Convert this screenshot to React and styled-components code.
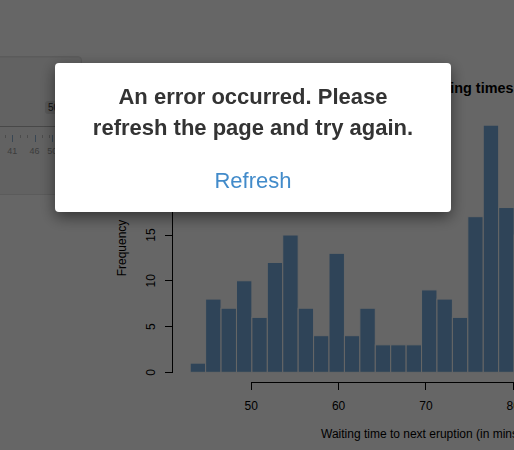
import React from "react";
import styled, { createGlobalStyle } from "styled-components";

const GlobalStyle = createGlobalStyle`
  html, body { margin: 0; padding: 0; background: #ffffff; overflow: hidden; }
  body {
    font-family: "Liberation Sans", Arial, Helvetica, sans-serif;
    font-size: 14px;
    color: #333333;
  }
`;

const Page = styled.div`
  position: relative;
  width: 514px;
  height: 450px;
  overflow: hidden;
`;

const Row = styled.div`
  display: flex;
  align-items: flex-start;
  gap: 31px;
  width: max-content;
  margin-left: -218px;
  padding-top: 55px;
`;

const Well = styled.div`
  box-sizing: border-box;
  width: 300px;
  height: 139px;
  margin-top: 1px;
  padding: 19px;
  background: #f5f5f5;
  border: 1px solid #e3e3e3;
  border-radius: 4px;
  box-shadow: inset 0 1px 1px rgba(0, 0, 0, 0.05);
`;

const Label = styled.label`
  display: block;
  font-weight: bold;
  line-height: 20px;
  margin-bottom: 5px;
`;

const Slider = styled.div`
  margin-top: 1px;
`;

const SliderTop = styled.div`
  display: flex;
  justify-content: flex-end;
  height: 25px;
`;

const EdgeBadge = styled.span`
  font-size: 10px;
  line-height: 13px;
  padding: 0 3px;
  border-radius: 3px;
  background: rgba(0, 0, 0, 0.1);
  color: #333333;
  align-self: flex-start;
`;

const Track = styled.div`
  height: 1px;
  background: #b4b4b4;
`;

const Grid = styled.svg`
  display: block;
  overflow: visible;
`;

const PlotSvg = styled.svg`
  display: block;
  flex: none;
`;

const Backdrop = styled.div`
  position: fixed;
  inset: 0;
  background: rgba(0, 0, 0, 0.6);
  display: flex;
  justify-content: center;
  align-items: flex-start;
  padding-right: 8px;
`;

const Modal = styled.div`
  box-sizing: border-box;
  width: 396px;
  margin-top: 63px;
  padding: 18px 30px 16px;
  background: #ffffff;
  border-radius: 4px;
  box-shadow: 0 5px 15px rgba(0, 0, 0, 0.5);
  text-align: center;
`;

const Message = styled.div`
  font-size: 22px;
  line-height: 31px;
  font-weight: bold;
  color: #333333;
`;

const RefreshLink = styled.a`
  display: inline-block;
  margin-top: 22px;
  font-size: 22px;
  line-height: 31px;
  color: #428bca;
  text-decoration: none;
  cursor: pointer;
`;

const counts = [1, 8, 7, 10, 6, 12, 15, 7, 4, 13, 4, 7, 3, 3, 3, 9, 8, 6, 17, 27, 18, 15, 16, 17, 13, 10, 6, 4, 2, 1];
const BIN0 = 190.2;
const BINW = 15.4233;
const Y0 = 372.3;
const YS = 9.153;
const xOf = (v) => 251.3 + (v - 50) * 8.73;
const yOf = (v) => Y0 - v * YS;

function Histogram() {
  const yTicks = [0, 5, 10, 15, 20, 25];
  const xTicks = [50, 60, 70, 80, 90];
  return (
    <PlotSvg width="589" height="400" viewBox="0 0 589 400">
      <g transform="translate(-113 -55)" fontFamily='"Liberation Sans", Arial, sans-serif' fill="#000">
        <text x="421.5" y="92.7" fontSize="14.4" fontWeight="bold" textAnchor="middle">
          Histogram of waiting times
        </text>
        {counts.map((c, i) => (
          <rect
            key={i}
            x={BIN0 + i * BINW}
            y={yOf(c)}
            width={BINW}
            height={c * YS}
            fill="#75AADB"
            stroke="#ffffff"
            strokeWidth="1"
          />
        ))}
        <g stroke="#000" strokeWidth="1" shapeRendering="crispEdges">
          <line x1="172.5" y1={yOf(25)} x2="172.5" y2={Y0} />
          {yTicks.map((v) => (
            <line key={v} x1="165" y1={yOf(v)} x2="172.5" y2={yOf(v)} />
          ))}
          <line x1={xOf(50)} y1="382.5" x2={xOf(90)} y2="382.5" />
          {xTicks.map((v) => (
            <line key={v} x1={xOf(v)} y1="382.5" x2={xOf(v)} y2="389.7" />
          ))}
        </g>
        {yTicks.map((v) => (
          <text key={v} transform={`translate(154.5 ${yOf(v)}) rotate(-90)`} fontSize="12" textAnchor="middle">
            {v}
          </text>
        ))}
        {xTicks.map((v) => (
          <text key={v} x={xOf(v)} y="409.5" fontSize="12" textAnchor="middle">
            {v}
          </text>
        ))}
        <text transform="translate(126 248) rotate(-90)" fontSize="12" textAnchor="middle">
          Frequency
        </text>
        <text x="421.5" y="438" fontSize="12" textAnchor="middle">
          Waiting time to next eruption (in mins)
        </text>
      </g>
    </PlotSvg>
  );
}

function SliderGrid() {
  const OFF = 198;
  const unit = 4.45;
  const px = (v) => 52.3 - (50 - v) * unit + OFF;
  const majors = [1, 6, 11, 16, 21, 26, 31, 36, 41, 46, 50];
  const minors = [];
  for (let i = 0; i < majors.length - 1; i++) {
    const a = px(majors[i]);
    const step = 5 * unit / 3;
    for (let k = 1; k <= 2; k++) minors.push(a + k * step);
  }
  return (
    <Grid width="262" height="30" viewBox="0 0 262 30">
      <g shapeRendering="crispEdges" strokeWidth="1">
        {minors.map((x, i) => (
          <line key={i} x1={Math.round(x) + 0.5} y1="8" x2={Math.round(x) + 0.5} y2="11" stroke="#bdbdbd" />
        ))}
        {majors.map((v) => (
          <line key={v} x1={Math.round(px(v)) + 0.5} y1="8" x2={Math.round(px(v)) + 0.5} y2="14.5" stroke="#8fb1d3" />
        ))}
      </g>
      {majors.map((v) => (
        <text
          key={v}
          x={px(v)}
          y="27"
          fontSize="9"
          fill="#999999"
          textAnchor="middle"
          fontFamily='"Liberation Sans", Arial, sans-serif'
        >
          {v}
        </text>
      ))}
    </Grid>
  );
}

export default function App() {
  return (
    <>
      <GlobalStyle />
      <Page>
        <Row>
          <Well>
            <Label>Number of bins:</Label>
            <Slider>
              <SliderTop>
                <EdgeBadge>50</EdgeBadge>
              </SliderTop>
              <Track />
              <SliderGrid />
            </Slider>
          </Well>
          <Histogram />
        </Row>
        <Backdrop>
          <Modal>
            <Message>An error occurred. Please refresh the page and try again.</Message>
            <RefreshLink href="#" onClick={(e) => e.preventDefault()}>
              Refresh
            </RefreshLink>
          </Modal>
        </Backdrop>
      </Page>
    </>
  );
}
